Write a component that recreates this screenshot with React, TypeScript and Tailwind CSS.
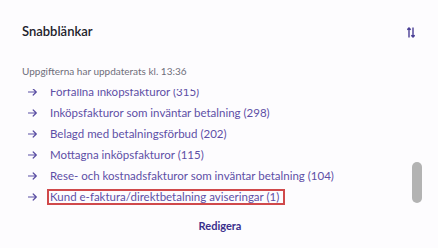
import React from "react";

const links = [
  "Förfallna inköpsfakturor (315)",
  "Inköpsfakturor som inväntar betalning (298)",
  "Belagd med betalningsförbud (202)",
  "Mottagna inköpsfakturor (115)",
  "Rese- och kostnadsfakturor som inväntar betalning (104)",
  "Kund e-faktura/direktbetalning aviseringar (1)",
];

function Arrow() {
  return (
    <svg width="9" height="8" viewBox="0 0 9 8" fill="none" stroke="#5a4ea3" strokeWidth="1.2">
      <path d="M0.5 4H8.3M5.2 1L8.3 4L5.2 7" strokeLinecap="round" strokeLinejoin="round" />
    </svg>
  );
}

function SortIcon() {
  return (
    <svg width="8" height="11" viewBox="0 0 8 11" fill="none" stroke="#4a3f95" strokeWidth="1.4">
      <path d="M2 10.5V1M0.3 2.8L2 1L3.7 2.8" />
      <path d="M6 0.5V10M4.3 8.2L6 10L7.7 8.2" />
    </svg>
  );
}

export default function App() {
  return (
    <div className="w-[438px] h-[248px] bg-[#fdfcfe] overflow-hidden font-['Lato',sans-serif]">
      <div className="flex items-center justify-between pl-[22px] pr-[23px] pt-[22px] h-[40px]">
        <h1 className="text-[13px] font-semibold text-[#23222b] leading-none">Snabblänkar</h1>
        <div className="mt-[3px]">
          <SortIcon />
        </div>
      </div>
      <p className="pl-[22px] mt-[25px] text-[10px] text-[#6f6e7a] leading-[12px]">
        Uppgifterna har uppdaterats kl. 13:36
      </p>
      <div className="relative mt-[12px] h-[121px] overflow-hidden">
        <ul className="-mt-[8px]">
          {links.map((l, i) => (
            <li key={l} className="flex items-center h-[21px] pl-[28px]">
              <Arrow />
              <span
                className={
                  i === links.length - 1
                    ? "ml-[10px] border-2 border-[#d0494b] pl-[1px] pr-[4px] h-[16px] flex items-center text-[11.5px] text-[#5d4fa6]"
                    : "ml-[13px] text-[11.5px] text-[#5d4fa6]"
                }
              >
                {l}
              </span>
            </li>
          ))}
        </ul>
        <div className="absolute right-[16px] top-[73px] w-[10px] h-[41px] rounded-full bg-[#b3b3b3]" />
      </div>
      <div className="flex justify-center mt-[10px] pl-[2px]">
        <button className="text-[11px] font-bold text-[#3a2f8c] leading-none">Redigera</button>
      </div>
    </div>
  );
}
